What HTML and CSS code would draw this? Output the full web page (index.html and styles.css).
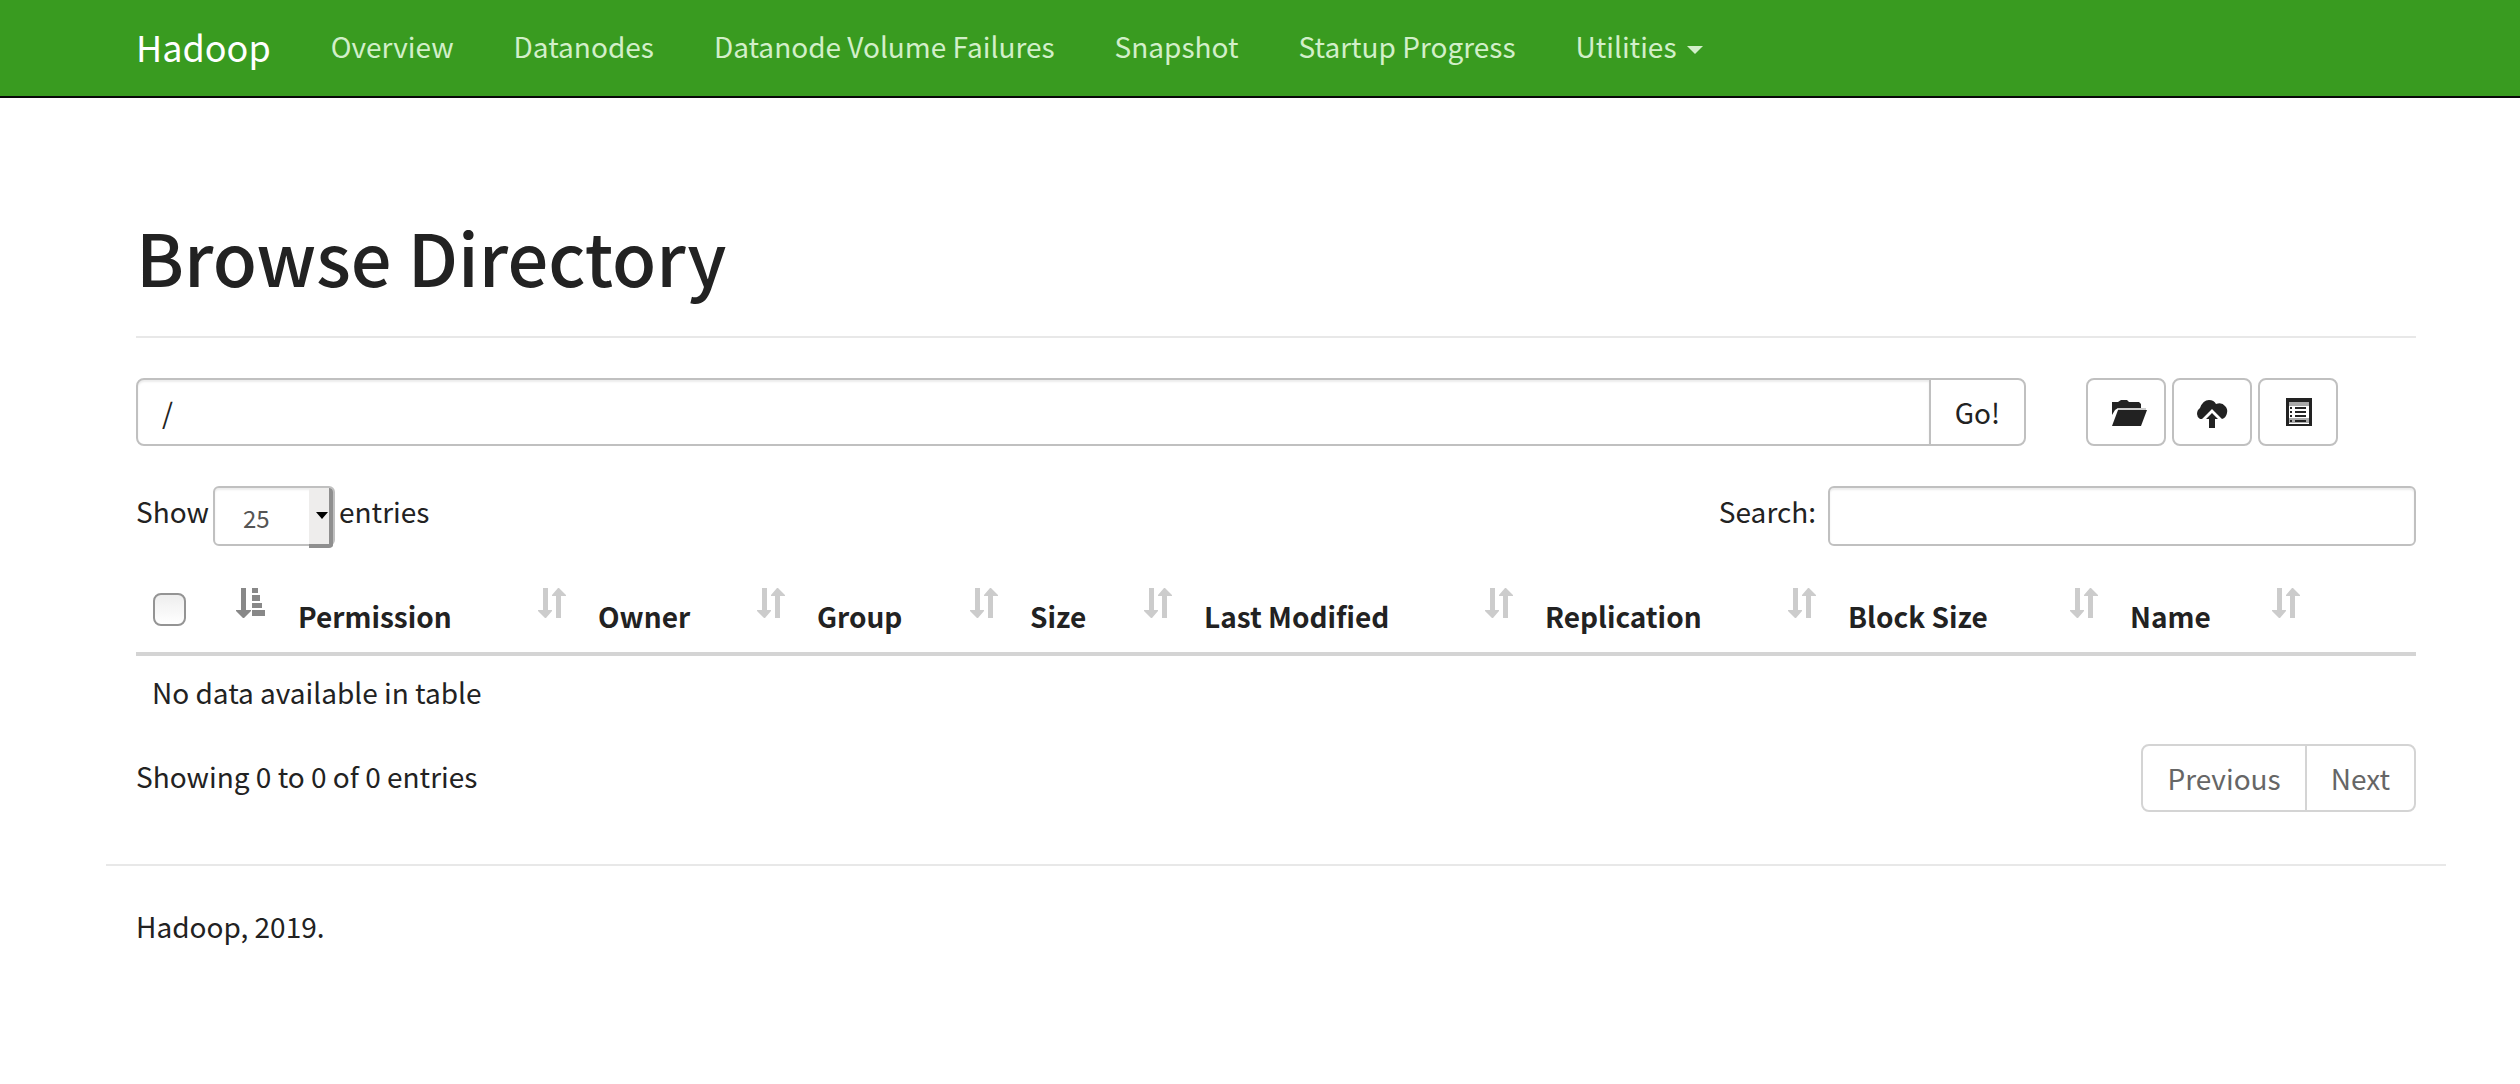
FILE: index.html
```html
<!DOCTYPE html>
<html lang="en">
<head>
<meta charset="utf-8">
<meta name="viewport" content="width=device-width, initial-scale=1">
<title>Browsing HDFS</title>
<link rel="stylesheet" href="styles.css">
</head>
<body>
<svg class="defs" aria-hidden="true">
  <symbol id="sort" viewBox="0 0 28 30">
    <path d="M5 0h5v22h4v1L8 30H7L0 23v-1h5z"/>
    <path d="M18 30h5V8h5V7L21 0h-1L14 7v1h4z"/>
  </symbol>
</svg>
<header class="navbar">
  <nav class="nav" aria-label="Main">
    <a class="brand" href="#">Hadoop</a>
    <a class="nav-link" href="#">Overview</a>
    <a class="nav-link" href="#">Datanodes</a>
    <a class="nav-link" href="#">Datanode Volume Failures</a>
    <a class="nav-link" href="#">Snapshot</a>
    <a class="nav-link" href="#">Startup Progress</a>
    <a class="nav-link" href="#">Utilities <span class="caret"></span></a>
  </nav>
</header>

<main class="container">
  <h1 class="page-title">Browse Directory</h1>

  <form class="path-row">
    <div class="path-group">
      <input class="control path-input" type="text" value="/" aria-label="Directory">
      <button class="btn btn-go" type="button">Go!</button>
    </div>
    <div class="actions">
      <button class="btn btn-icon" type="button" aria-label="Create directory">
        <svg class="icon" viewBox="0 0 28 28"><path d="M0 17V4h6l3-2h6l2 2h10l2 2v4H6l-3 2z"/><path fill="#ccc" d="M6 10h28v2H6z"/><path d="M6 12h29l-6 16H0z"/></svg>
      </button>
      <button class="btn btn-icon" type="button" aria-label="Upload files">
        <svg class="icon" viewBox="0 0 28 28"><path d="M2 21q-3-2-3-5 0-4 3-6Q5 2 11 2q5 0 7 4 6-2 9 2 3 3 2 7-1 5-5 6L14 11 4 21z"/><path d="M14 15l6 6h-3v9h-6v-9H8z"/></svg>
      </button>
      <button class="btn btn-icon" type="button" aria-label="Cut and paste">
        <svg class="icon" viewBox="0 0 28 28"><path fill-rule="evenodd" d="M2 0h26v28H2zM5 4v22h20V4z"/><path fill="#aaa" d="M5 4h20v4H5zM5 20h20v5H5z"/><path d="M6 9h2v2H6zM11 9h11v2H11zM6 13h2v2H6zM11 13h11v2H11zM6 17h2v2H6zM11 17h11v2H11zM6 22h2v2H6zM11 22h11v2H11z"/></svg>
      </button>
    </div>
  </form>

  <div class="toolbar">
    <label class="length">Show
      <span class="select-wrap">
        <select class="control select">
          <option>25</option>
          <option>50</option>
          <option>100</option>
        </select>
      </span>
      entries</label>
    <label class="search">Search: <input class="control search-input" type="search"></label>
  </div>

  <table class="table">
    <colgroup>
      <col class="c-check"><col class="c-perm"><col class="c-owner"><col class="c-group"><col class="c-size">
      <col class="c-mod"><col class="c-rep"><col class="c-block"><col class="c-name"><col class="c-tools">
    </colgroup>
    <thead>
      <tr>
        <th><div class="th-in"><input class="check" type="checkbox" aria-label="Select all"><svg class="sort active" viewBox="0 0 30 30"><path d="M5 0h5v22h5v1L8 30H7L0 23v-1h5z"/><path d="M16 0h6v5h-6zM16 7h8v6h-8zM16 15h10v5H16zM16 22h13v6H16z"/></svg></div></th>
        <th><div class="th-in">Permission<svg class="sort"><use href="#sort"/></svg></div></th>
        <th><div class="th-in">Owner<svg class="sort"><use href="#sort"/></svg></div></th>
        <th><div class="th-in">Group<svg class="sort"><use href="#sort"/></svg></div></th>
        <th><div class="th-in">Size<svg class="sort"><use href="#sort"/></svg></div></th>
        <th><div class="th-in">Last Modified<svg class="sort"><use href="#sort"/></svg></div></th>
        <th><div class="th-in">Replication<svg class="sort"><use href="#sort"/></svg></div></th>
        <th><div class="th-in">Block Size<svg class="sort"><use href="#sort"/></svg></div></th>
        <th><div class="th-in">Name<svg class="sort"><use href="#sort"/></svg></div></th>
        <th></th>
      </tr>
    </thead>
    <tbody>
      <tr><td colspan="10">No data available in table</td></tr>
    </tbody>
  </table>

  <div class="table-foot">
    <p class="info">Showing 0 to 0 of 0 entries</p>
    <div class="pager">
      <button class="page" type="button">Previous</button>
      <button class="page" type="button">Next</button>
    </div>
  </div>
</main>

<footer class="footer">
  <p>Hadoop, 2019.</p>
</footer>
</body>
</html>
```

FILE: styles.css
```css
* { box-sizing: border-box; }

body {
  margin: 0;
  background: #fff;
  color: #222;
  font: 28px/40px "Noto Sans CJK SC", "Noto Sans", sans-serif;
}

p { margin: 0; }

.defs { display: none; }

.navbar {
  padding: 0 74px 0 106px;
  background: #399b20;
  border-bottom: 2px solid #080808;
}

.nav { display: flex; }

.brand, .nav-link {
  padding: 26px 30px 30px;
  color: #d2efc9;
  text-decoration: none;
}

.brand {
  color: #fff;
  font-size: 36px;
}

.caret {
  display: inline-block;
  margin-left: 4px;
  vertical-align: middle;
  border: 8px solid transparent;
  border-top-color: currentColor;
  border-bottom: 0;
}

.container {
  margin: 0 74px 0 106px;
  padding: 118px 30px 52px;
}

.page-title {
  margin: 0 0 40px;
  padding-bottom: 40px;
  border-bottom: 2px solid #e8e8e8;
  font-size: 72px;
  font-weight: 500;
  line-height: 80px;
}

.path-row {
  display: flex;
  gap: 60px;
}

.path-group {
  display: flex;
  flex: 1;
}

.actions {
  display: flex;
  gap: 6px;
  width: 330px;
}

.control {
  border: 2px solid #c0c0c0;
  border-radius: 6px;
  background: #fff;
  box-shadow: inset 0 2px 2px #ececec;
  color: #555;
  font: inherit;
}

.path-input {
  flex: 1;
  min-width: 0;
  height: 68px;
  padding: 12px 24px;
  border-radius: 8px 0 0 8px;
  color: #222;
}

.btn {
  height: 68px;
  padding: 0 24px;
  border: 2px solid #c0c0c0;
  border-radius: 8px;
  background: #fff;
  color: #222;
  font: inherit;
}

.btn-go {
  margin-left: -2px;
  border-radius: 0 8px 8px 0;
}

.btn-icon {
  display: flex;
  align-items: center;
  justify-content: center;
  width: 80px;
  padding: 0;
}

.icon {
  width: 28px;
  height: 28px;
  fill: #222;
  overflow: visible;
}

.toolbar {
  display: flex;
  justify-content: space-between;
  margin-top: 40px;
}

.length, .search {
  display: flex;
  align-items: flex-start;
  gap: 4px;
  height: 60px;
  line-height: 50px;
}

.search { gap: 12px; }

.select-wrap {
  position: relative;
  display: flex;
}

.select {
  appearance: none;
  width: 122px;
  height: 60px;
  padding: 4px 28px 0;
  font-size: 24px;
}

.select-wrap::before {
  content: "";
  position: absolute;
  top: 2px;
  right: 2px;
  width: 20px;
  height: 56px;
  border: solid #8f8f8f;
  border-width: 0 4px 4px 0;
  border-radius: 0 4px 4px 0;
  background: #eeedec;
  pointer-events: none;
}

.select-wrap::after {
  content: "";
  position: absolute;
  top: 26px;
  right: 7px;
  border: 6px solid transparent;
  border-top: 7px solid #000;
  border-bottom: 0;
  pointer-events: none;
}

.search-input {
  width: 588px;
  height: 60px;
  padding: 0 20px;
}

.table {
  width: 100%;
  margin-top: 22px;
  border-collapse: collapse;
  table-layout: fixed;
}

.c-check { width: 146px; }
.c-perm { width: 300px; }
.c-owner { width: 219px; }
.c-group { width: 213px; }
.c-size { width: 174px; }
.c-mod { width: 341px; }
.c-rep { width: 303px; }
.c-block { width: 282px; }
.c-name { width: 202px; }
.c-tools { width: 100px; }

th {
  height: 86px;
  padding: 16px;
  border-bottom: 4px solid #d4d4d4;
  font-weight: 700;
  text-align: left;
  vertical-align: bottom;
}

.th-in {
  display: flex;
  align-items: flex-end;
  justify-content: space-between;
  height: 52px;
}

.sort {
  align-self: flex-start;
  width: 28px;
  height: 30px;
  margin-top: 4px;
  fill: #ccc;
}

.sort.active {
  width: 30px;
  fill: #888;
}

.check {
  appearance: none;
  align-self: flex-start;
  width: 33px;
  height: 33px;
  margin: 9px 0 0 1px;
  border: 2px solid #949494;
  border-radius: 8px;
  background: linear-gradient(#eee, #fff);
}

td { padding: 16px; }

.table-foot {
  display: flex;
  justify-content: space-between;
  margin-top: 16px;
}

.info { padding-top: 12px; }

.pager { display: flex; }

.page {
  height: 68px;
  padding: 0 24px;
  border: 2px solid #d4d4d4;
  border-radius: 8px 0 0 8px;
  background: #fff;
  color: #666;
  font: inherit;
}

.page + .page {
  margin-left: -2px;
  border-radius: 0 8px 8px 0;
}

.footer {
  margin: 0 74px 40px 106px;
  padding: 40px 30px 0;
  border-top: 2px solid #e8e8e8;
}
```
